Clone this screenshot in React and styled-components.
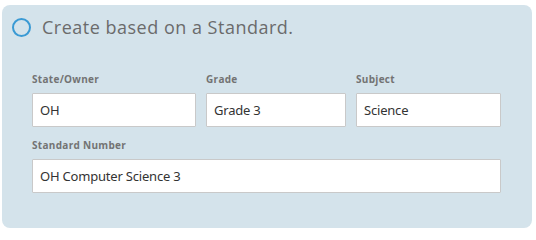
import React from "react";
import styled, { createGlobalStyle } from "styled-components";

const Global = createGlobalStyle`
  html, body { margin: 0; padding: 0; background: #ffffff; }
  body { font-family: "Open Sans", "Noto Sans", sans-serif; }
`;

const Page = styled.div`
  padding: 5px 4px 5px 2px;
  width: 536px;
  box-sizing: border-box;
`;

const Card = styled.section`
  background: #d4e3eb;
  border-radius: 8px;
  padding: 11px 31px 34px 30px;
  height: 223px;
  box-sizing: border-box;
`;

const Header = styled.div`
  display: flex;
  align-items: center;
  gap: 11px;
  margin-left: -20px;
  height: 22px;
`;

const Radio = styled.span`
  width: 15px;
  height: 15px;
  border: 2px solid #3a9ad4;
  border-radius: 50%;
  flex: none;
`;

const Title = styled.h2`
  margin: 0;
  font-family: "Open Sans", sans-serif;
  font-weight: 400;
  font-size: 18px;
  letter-spacing: 0.5px;
  color: #6b6b6b;
`;

const Row = styled.div`
  display: grid;
  grid-template-columns: ${(p) => p.$cols};
  column-gap: 10px;
  margin-top: ${(p) => p.$top}px;
`;

const Field = styled.label`
  display: flex;
  flex-direction: column;
`;

const Label = styled.span`
  font-family: "Open Sans", sans-serif;
  font-weight: 700;
  font-size: 10px;
  letter-spacing: 0.3px;
  color: #737373;
  height: 12px;
  line-height: 12px;
  margin-bottom: 8px;
`;

const Input = styled.div`
  height: 34px;
  box-sizing: border-box;
  background: #ffffff;
  border: 1px solid #c9c9c9;
  border-radius: 1px;
  padding: 0 7px;
  display: flex;
  align-items: center;
  font-family: "Noto Sans", sans-serif;
  font-size: 13px;
  letter-spacing: -0.2px;
  color: #333333;
`;

export default function App() {
  return (
    <>
      <Global />
      <Page>
        <Card>
          <Header>
            <Radio />
            <Title>Create based on a Standard.</Title>
          </Header>
          <Row $cols="164px 140px 1fr" $top={35}>
            <Field>
              <Label>State/Owner</Label>
              <Input>OH</Input>
            </Field>
            <Field>
              <Label>Grade</Label>
              <Input>Grade 3</Input>
            </Field>
            <Field>
              <Label>Subject</Label>
              <Input>Science</Input>
            </Field>
          </Row>
          <Row $cols="1fr" $top={12}>
            <Field>
              <Label>Standard Number</Label>
              <Input>OH Computer Science 3</Input>
            </Field>
          </Row>
        </Card>
      </Page>
    </>
  );
}
